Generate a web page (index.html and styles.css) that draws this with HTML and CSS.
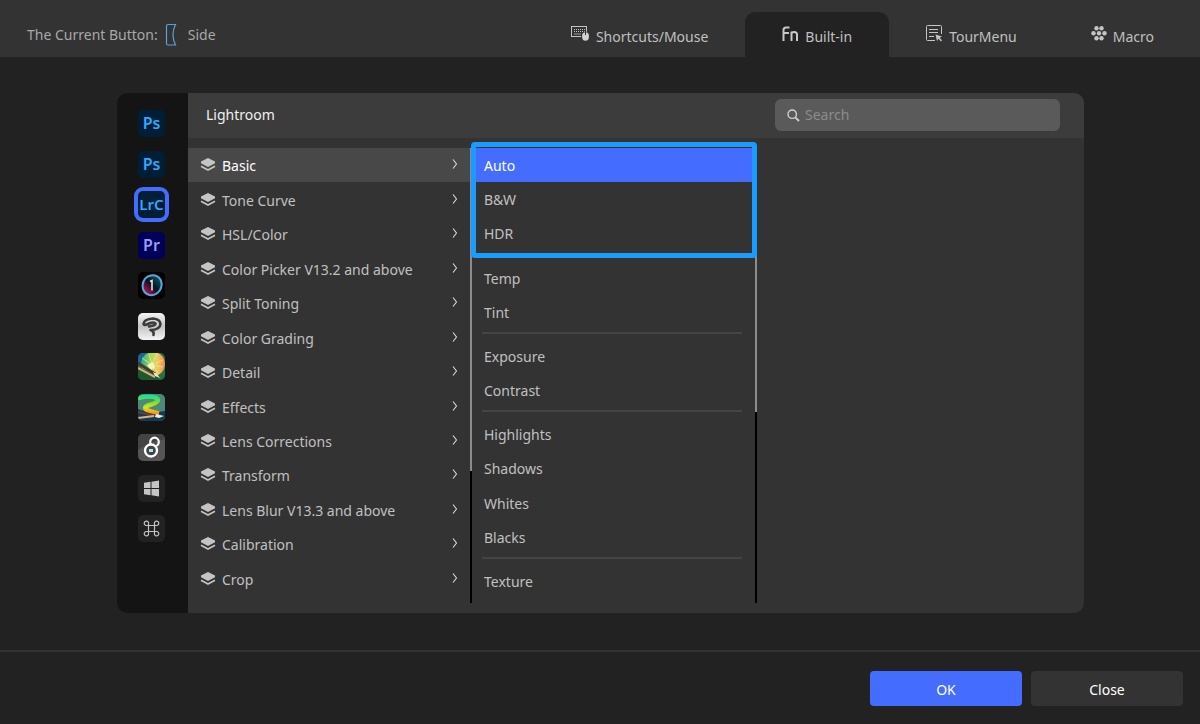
FILE: index.html
```
<!DOCTYPE html>
<html lang="en">
<head>
    <meta charset="UTF-8">
    <meta name="viewport" content="width=device-width, initial-scale=1.0">
    <title>Button Settings</title>
    <link rel="stylesheet" href="styles.css">
</head>
<body>
    <!-- shared shapes -->
    <svg class="defs" aria-hidden="true">
        <symbol id="layers" viewBox="0 0 16 14">
            <path d="M8 0 L15 3.400 V5.200 L8 9 L1 5.200 V3.400 Z" fill="#c4c4c4"/>
            <path d="M1 8.200 L8 12 L15 8.200" fill="none" stroke="#c4c4c4" stroke-width="1.600"/>
        </symbol>
        <symbol id="arrow" viewBox="0 0 6 10">
            <path d="M1 0.500 L4.500 5 L1 9.500" fill="none" stroke="#dcdcdc" stroke-width="1.100"/>
        </symbol>
    </svg>

    <header class="topbar">
        <div class="current">
            <span>The Current Button:</span>
            <svg width="12" height="24" viewBox="0 0 12 24"><path d="M3 1.500 H10.500 Q5.500 11.500 10.500 22 H3 Q1.500 22 1.500 20.500 V3 Q1.500 1.500 3 1.500 Z" fill="none" stroke="#5a9fd6" stroke-width="1.200"/></svg>
            <span>Side</span>
        </div>
        <nav class="tabs">
            <button class="tab">
                <svg width="19" height="16" viewBox="0 0 19 16">
                    <rect x="0.500" y="0.500" width="15" height="10" fill="none" stroke="#c4c4c4"/>
                    <path d="M3 3.500 H14 M3 5.500 H14" stroke="#c4c4c4" stroke-dasharray="1 1"/>
                    <path d="M3 8 H10" stroke="#a0a0a0"/>
                    <ellipse cx="14.500" cy="10.500" rx="4.500" ry="5" fill="#333"/>
                    <ellipse cx="14.500" cy="10.500" rx="3.500" ry="4.200" fill="#d0d0d0"/>
                    <path d="M14.500 6 V9" stroke="#333"/>
                </svg>
                Shortcuts/Mouse
            </button>
            <button class="tab active">
                <svg width="17" height="16" viewBox="0 0 17 16"><path d="M1.500 15 V4 Q1.500 1.500 4 1.500 H7.500 M1.500 7 H7 M9.500 15 V5.500 M9.500 8 Q9.500 6 12 6 Q15 6 15 8.500 V15" fill="none" stroke="#c8c8c8" stroke-width="2"/></svg>
                Built-in
            </button>
            <button class="tab">
                <svg width="17" height="17" viewBox="0 0 17 17">
                    <path d="M15.500 9 V1.500 Q15.500 0.500 14.500 0.500 H1.500 Q0.500 0.500 0.500 1.500 V14.500 Q0.500 15.500 1.500 15.500 H9" fill="none" stroke="#c4c4c4"/>
                    <path d="M3 4.500 H12 M3 7.500 H12 M3 11.500 H8" stroke="#c4c4c4"/>
                    <path d="M9.500 9.500 L16 11.500 L13.800 12.800 L16 15.500 L15 16.500 L12.500 13.800 L11 16 Z" fill="#c4c4c4"/>
                </svg>
                TourMenu
            </button>
            <button class="tab">
                <svg width="16" height="15" viewBox="0 0 16 15" fill="#c4c4c4">
                    <circle cx="5.500" cy="2.300" r="2.200"/><circle cx="10.500" cy="2.300" r="2.200"/>
                    <circle cx="2.500" cy="7.300" r="2.200"/><circle cx="8" cy="7.300" r="2.200"/><circle cx="13.500" cy="7.300" r="2.200"/>
                    <circle cx="5.500" cy="12.300" r="2.200"/><circle cx="10.500" cy="12.300" r="2.200"/>
                </svg>
                Macro
            </button>
        </nav>
    </header>

    <main>
        <div class="panel">
            <aside class="apps">
                <button class="app ps" aria-label="Photoshop">Ps</button>
                <button class="app ps" aria-label="Photoshop Beta">Ps</button>
                <button class="app lrc" aria-label="Lightroom">LrC</button>
                <button class="app pr" aria-label="Premiere Pro">Pr</button>
                <button class="app" aria-label="Capture One">
                    <svg viewBox="0 0 27 27">
                        <defs>
                            <linearGradient id="c1" x1="0" y1="1" x2="1" y2="0"><stop offset="0.200" stop-color="#a0104c"/><stop offset="0.500" stop-color="#08141c"/><stop offset="1" stop-color="#0c6a78"/></linearGradient>
                        </defs>
                        <rect width="27" height="27" fill="#000"/>
                        <path d="M13 3.500 Q19 2.500 22.500 7.500 Q25 13 22 18 Q18 24 11.500 23 Q5 21.500 4.500 14 Q5 5 13 3.500 Z" fill="url(#c1)" stroke="#58a8dc" stroke-width="2"/>
                        <path d="M12 9.500 L14 8.500 V18.500" fill="none" stroke="#e4e4e4" stroke-width="1.600"/>
                    </svg>
                </button>
                <button class="app" aria-label="Clip Studio Paint">
                    <svg viewBox="0 0 27 27">
                        <defs>
                            <linearGradient id="csp" x1="0" y1="0" x2="0" y2="1"><stop offset="0" stop-color="#f4f4f4"/><stop offset="0.500" stop-color="#c4c4c4"/><stop offset="1" stop-color="#f4f4f4"/></linearGradient>
                        </defs>
                        <rect width="27" height="27" fill="url(#csp)"/>
                        <path d="M11 13.500 Q17.500 12.500 17.500 10.500 Q16 8.500 11 10.500 Q6 13 5.500 11 Q6 6 15 5.500 Q22 6 22.500 11 Q22 17 12.500 17 Q16.500 18.500 15.500 22" fill="none" stroke="#3b3b3b" stroke-width="2.600" stroke-linejoin="round" stroke-linecap="round"/>
                    </svg>
                </button>
                <button class="app" aria-label="SAI">
                    <svg viewBox="0 0 27 27">
                        <defs>
                            <linearGradient id="lime" x1="0" y1="0" x2="1" y2="0"><stop offset="0" stop-color="#28a890"/><stop offset="0.450" stop-color="#b0dc50"/><stop offset="0.700" stop-color="#f4c860"/><stop offset="1" stop-color="#e88858"/></linearGradient>
                        </defs>
                        <rect width="27" height="27" fill="#2c7040"/>
                        <path d="M0 0 H8 L2 12 L0 14 Z" fill="#186890"/>
                        <circle cx="15" cy="11" r="12" fill="url(#lime)"/>
                        <path d="M14 12 L4 5 M14 12 L11 1 M14 12 L19 1 M14 12 L25 7 M14 12 L25 14 M14 12 L21 21" stroke="#f0ec9c" stroke-width="0.700"/>
                        <path d="M9 12 L15 9 L17 15 L13 17 Z" fill="#f4f4c0"/>
                        <path d="M0 14 L8 17 L17 22 L22 27 H0 Z" fill="#20572c"/>
                        <path d="M0 10 L17 21" stroke="#4e382c" stroke-width="3"/>
                        <path d="M0 15 L17 24" stroke="#d0b080" stroke-width="2"/>
                        <path d="M15 19 L19 21 L22 25 L17 23 Z" fill="#ece8dc"/>
                    </svg>
                </button>
                <button class="app" aria-label="SAI 2">
                    <svg viewBox="0 0 27 27">
                        <defs>
                            <linearGradient id="wave" x1="0" y1="0" x2="0" y2="1"><stop offset="0" stop-color="#20e090"/><stop offset="0.350" stop-color="#80e420"/><stop offset="0.650" stop-color="#d8e028"/><stop offset="1" stop-color="#ff9020"/></linearGradient>
                        </defs>
                        <rect width="27" height="27" fill="#4e8878"/>
                        <path d="M0 15 Q10 20 27 17 V27 H0 Z" fill="#163a54"/>
                        <path d="M0 4 Q15 1 19 4.500 Q22 8 13 10.500 Q4 13 9 16 Q14 18 21 19.500" fill="none" stroke="url(#wave)" stroke-width="4.500"/>
                        <path d="M0 18 L19 22" stroke="#604030" stroke-width="2.500"/>
                        <path d="M0 24 L16 22" stroke="#d8b488" stroke-width="2"/>
                        <path d="M18 20 L26 22 L21 24 L17 23 Z" fill="#f0ece0"/>
                    </svg>
                </button>
                <button class="app" aria-label="Procreate">
                    <svg viewBox="0 0 27 27">
                        <rect width="27" height="27" fill="#555"/>
                        <path d="M0 0 H27 V5 L12 9 L0 16 Z" fill="#444"/>
                        <circle cx="16.500" cy="8" r="4.300" fill="none" stroke="#fff" stroke-width="2.200"/>
                        <circle cx="13" cy="16.500" r="6" fill="#444" stroke="#fff" stroke-width="2.400"/>
                        <rect x="11" y="15" width="4" height="3" fill="#a8e8ec"/>
                    </svg>
                </button>
                <button class="app" aria-label="Windows">
                    <svg viewBox="0 0 27 27" fill="#c4c4c4">
                        <path d="M6 7.800 L12.500 6.800 V13 H6 Z M13.500 6.700 L21 5.500 V13 H13.500 Z M6 14 H12.500 V20.200 L6 19.200 Z M13.500 14 H21 V21.500 L13.500 20.300 Z"/>
                    </svg>
                </button>
                <button class="app" aria-label="System">
                    <svg viewBox="0 0 27 27">
                        <path d="M10.500 10.500 H16.500 V16.500 H10.500 Z M10.500 10.500 V9 A2.200 2.200 0 1 0 8.300 10.500 Z M16.500 10.500 V9 A2.200 2.200 0 1 1 18.700 10.500 Z M10.500 16.500 V18 A2.200 2.200 0 1 1 8.300 16.500 Z M16.500 16.500 V18 A2.200 2.200 0 1 0 18.700 16.500 Z" fill="none" stroke="#c4c4c4" stroke-width="1.200"/>
                    </svg>
                </button>
            </aside>

            <section class="content">
                <div class="content-head">
                    <h1>Lightroom</h1>
                    <label class="search">
                        <svg width="13" height="13" viewBox="0 0 13 13"><circle cx="5.200" cy="5.200" r="4.200" fill="none" stroke="#d0d0d0" stroke-width="1.400"/><path d="M8.300 8.300 L12 12" stroke="#d0d0d0" stroke-width="1.800"/></svg>
                        <input type="search" placeholder="Search" aria-label="Search">
                    </label>
                </div>
                <div class="columns">
                    <div class="column">
                        <div class="list categories">
                            <button class="item active"><svg class="layers"><use href="#layers"/></svg>Basic<svg class="arrow"><use href="#arrow"/></svg></button>
                            <button class="item"><svg class="layers"><use href="#layers"/></svg>Tone Curve<svg class="arrow"><use href="#arrow"/></svg></button>
                            <button class="item"><svg class="layers"><use href="#layers"/></svg>HSL/Color<svg class="arrow"><use href="#arrow"/></svg></button>
                            <button class="item"><svg class="layers"><use href="#layers"/></svg>Color Picker V13.2 and above<svg class="arrow"><use href="#arrow"/></svg></button>
                            <button class="item"><svg class="layers"><use href="#layers"/></svg>Split Toning<svg class="arrow"><use href="#arrow"/></svg></button>
                            <button class="item"><svg class="layers"><use href="#layers"/></svg>Color Grading<svg class="arrow"><use href="#arrow"/></svg></button>
                            <button class="item"><svg class="layers"><use href="#layers"/></svg>Detail<svg class="arrow"><use href="#arrow"/></svg></button>
                            <button class="item"><svg class="layers"><use href="#layers"/></svg>Effects<svg class="arrow"><use href="#arrow"/></svg></button>
                            <button class="item"><svg class="layers"><use href="#layers"/></svg>Lens Corrections<svg class="arrow"><use href="#arrow"/></svg></button>
                            <button class="item"><svg class="layers"><use href="#layers"/></svg>Transform<svg class="arrow"><use href="#arrow"/></svg></button>
                            <button class="item"><svg class="layers"><use href="#layers"/></svg>Lens Blur V13.3 and above<svg class="arrow"><use href="#arrow"/></svg></button>
                            <button class="item"><svg class="layers"><use href="#layers"/></svg>Calibration<svg class="arrow"><use href="#arrow"/></svg></button>
                            <button class="item"><svg class="layers"><use href="#layers"/></svg>Crop<svg class="arrow"><use href="#arrow"/></svg></button>
                        </div>
                        <div class="scrollbar"><div class="thumb first"></div></div>
                    </div>
                    <div class="column">
                        <div class="list functions">
                            <div class="marked">
                                <button class="item selected">Auto</button>
                                <button class="item">B&amp;W</button>
                                <button class="item">HDR</button>
                            </div>
                            <hr>
                            <button class="item">Temp</button>
                            <button class="item">Tint</button>
                            <hr>
                            <button class="item">Exposure</button>
                            <button class="item">Contrast</button>
                            <hr>
                            <button class="item">Highlights</button>
                            <button class="item">Shadows</button>
                            <button class="item">Whites</button>
                            <button class="item">Blacks</button>
                            <hr>
                            <button class="item">Texture</button>
                        </div>
                        <div class="scrollbar"><div class="thumb second"></div></div>
                    </div>
                </div>
            </section>
        </div>
    </main>

    <footer>
        <button class="ok">OK</button>
        <button class="close">Close</button>
    </footer>
</body>
</html>
```
FILE: styles.css
```
* {
    box-sizing: border-box;
}
body {
    margin: 0;
    min-height: 100vh;
    display: flex;
    flex-direction: column;
    background-color: #222;
    color: #c0c0c0;
    font-family: "Noto Sans", "Open Sans", sans-serif;
    font-size: 14px;
    line-height: 20px;
}
button {
    border: none;
    padding: 0;
    background: none;
    color: inherit;
    font: inherit;
    cursor: pointer;
}
svg {
    flex: none;
}
.defs {
    display: none;
}

/* top bar */
.topbar {
    display: flex;
    justify-content: space-between;
    padding: 12px 9px 0 27px;
    background-color: #333;
}
.current {
    display: flex;
    align-items: center;
    gap: 7px;
    padding-top: 1px;
    color: #a8a8a8;
}
.current span:last-child {
    margin-left: 4px;
}
.tabs {
    display: flex;
}
.tab {
    display: flex;
    align-items: center;
    gap: 6px;
    height: 45px;
    padding: 4px 37px 0;
    border-radius: 10px 10px 0 0;
}
.tab svg {
    margin-bottom: 6px;
}
.tab.active {
    background-color: #222;
}

/* main panel */
main {
    flex: 1;
    display: flex;
    padding: 36px 116px 37px 117px;
}
.panel {
    flex: 1;
    display: flex;
    border-radius: 10px;
    overflow: hidden;
    background-color: #333;
}
.apps {
    width: 71px;
    padding: 17px 2px 71px 0;
    display: flex;
    flex-direction: column;
    align-items: center;
    justify-content: space-between;
    background-color: #141414;
}
.app {
    width: 27px;
    height: 27px;
    border-radius: 5px;
    overflow: hidden;
    background-color: #222;
    font-weight: 600;
    font-size: 16px;
    line-height: 25px;
}
.app svg {
    display: block;
}
.app.ps, .app.lrc {
    background-color: #001e36;
    color: #31a8ff;
}
.app.lrc {
    box-shadow: 0 0 0 4px #446dff;
    font-size: 15px;
}
.app.pr {
    background-color: #00005b;
    color: #9999ff;
}

.content {
    flex: 1;
    display: flex;
    flex-direction: column;
}
.content-head {
    height: 45px;
    padding: 0 24px 1px 18px;
    display: flex;
    align-items: center;
    justify-content: space-between;
    background-color: #3c3c3c;
}
h1 {
    margin: 0;
    font-size: 14px;
    font-weight: 400;
    color: #f0f0f0;
}
.search {
    width: 285px;
    height: 32px;
    padding: 0 12px;
    display: flex;
    align-items: center;
    gap: 5px;
    border-radius: 6px;
    background-color: #5a5a5a;
}
.search input {
    flex: 1;
    min-width: 0;
    padding: 0;
    border: none;
    outline: none;
    background: none;
    color: #f0f0f0;
    font: inherit;
}
.search input::placeholder {
    color: #8c8c8c;
}

.columns {
    flex: 1;
    display: grid;
    grid-template-columns: 284fr 285fr 327fr;
    padding: 10px 0;
}
.column {
    display: flex;
}
.list {
    flex: 1;
    display: flex;
    flex-direction: column;
}
.categories {
    padding-bottom: 7px;
}
.functions {
    padding-bottom: 5px;
}
.item {
    flex: 1;
    display: flex;
    align-items: center;
    padding: 2px 12px 0;
    text-align: left;
}
.item.active {
    background-color: #484848;
    color: #fff;
}
.item.selected {
    background-color: #446dff;
    color: #fff;
}
.layers {
    width: 16px;
    height: 14px;
    margin: 0 6px 2px 0;
}
.arrow {
    width: 6px;
    height: 10px;
    margin: 0 0 4px auto;
}
.marked {
    flex: 3 3 6px;
    display: flex;
    flex-direction: column;
    position: relative;
}
.marked::after {
    content: "";
    position: absolute;
    inset: -6px -2px -7px -1px;
    border: 5px solid #1a9bff;
    border-radius: 4px;
    pointer-events: none;
}
hr {
    width: 260px;
    margin: 3px 0 5px 10px;
    border: none;
    border-top: 2px solid #444;
}
.scrollbar {
    width: 2px;
    background-color: #000;
}
.thumb {
    background-color: #8c8c8c;
}
.thumb.first {
    height: 71%;
}
.thumb.second {
    height: 58%;
}

/* bottom buttons */
footer {
    display: flex;
    justify-content: flex-end;
    gap: 9px;
    padding: 19px 17px 18px;
    border-top: 2px solid #333;
}
footer button {
    width: 152px;
    height: 35px;
    padding-top: 2px;
    border-radius: 4px;
    color: #fff;
}
.ok {
    background-color: #446dff;
}
.close {
    background-color: #333;
}
```
